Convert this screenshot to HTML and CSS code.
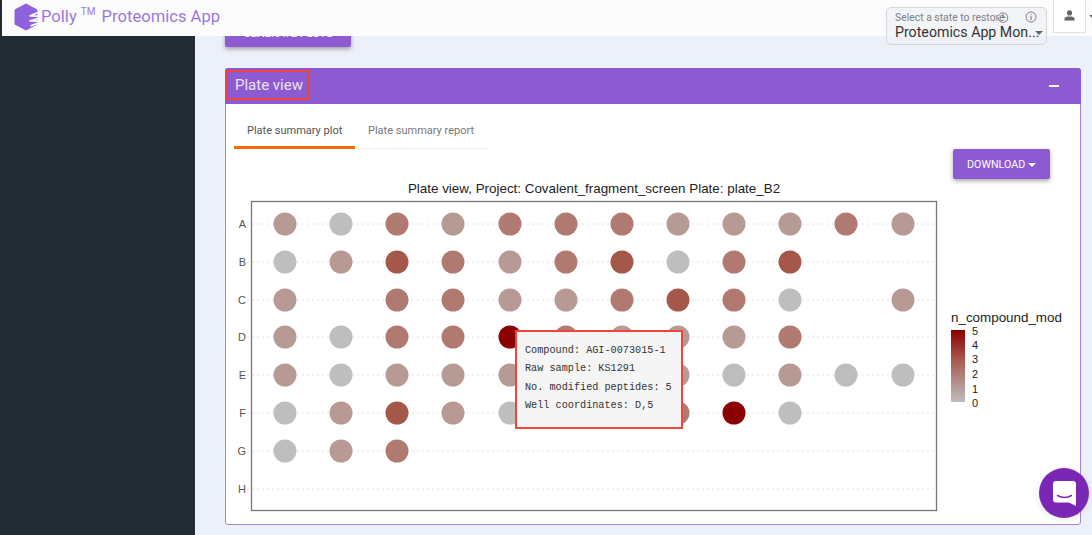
FILE: index.html
```html
<!DOCTYPE html>
<html lang="en">
<head>
  <meta charset="UTF-8">
  <title>Polly Proteomics App</title>
  <link rel="stylesheet" href="styles.css">
</head>
<body>
  <header class="topbar">
    <svg class="logo" viewBox="0 0 24 28" width="24" height="28">
      <path d="M12 0.5 L22.5 6 Q23.5 6.6 23.5 7.6 V20.4 Q23.5 21.4 22.5 22 L12 27.5 L1.5 22 Q0.5 21.4 0.5 20.4 V7.6 Q0.5 6.6 1.5 6 Z" fill="#8e62dc"/>
      <path d="M24 9.5 L15.5 13 L24 13.2 M24 15.6 L15.5 18 L24 18.2 M24 20 L16.5 23" fill="none" stroke="#fcfcfc" stroke-width="1.7"/>
    </svg>
    <span class="brand">Polly<sup>TM</sup> Proteomics App</span>

    <div class="state-select">
      <div class="state-label">Select a state to restore</div>
      <div class="state-value">Proteomics App Mon...</div>
      <span class="caret state-caret"></span>
      <svg class="state-icon history" viewBox="0 0 12 12" width="12" height="12">
        <path d="M2 4 A4.8 4.8 0 1 1 1.2 6.5 M6 3.2 V6.4 H8.6" fill="none" stroke="#666" stroke-width="0.8"/>
      </svg>
      <svg class="state-icon info" viewBox="0 0 12 12" width="12" height="12">
        <circle cx="6" cy="6" r="5" fill="none" stroke="#666" stroke-width="0.8"/>
        <path d="M6 5.2 V9 M6 3.2 V4.2" stroke="#666" stroke-width="1"/>
      </svg>
    </div>

    <button class="user-btn">
      <svg viewBox="0 0 12 12" width="11" height="11">
        <circle cx="6" cy="3.2" r="2.8" fill="#666"/>
        <path d="M0.5 11.5 V9.6 C0.5 7.6 3.5 7 6 7 C8.5 7 11.5 7.6 11.5 9.6 V11.5 Z" fill="#666"/>
      </svg>
    </button>
    <span class="caret user-caret"></span>
  </header>

  <div class="layout">
    <aside class="sidebar"></aside>

    <main class="content">
      <button class="btn generate">GENERATE PLOTS</button>

      <section class="panel">
        <div class="panel-head">
          <h2 class="panel-title">Plate view</h2>
          <span class="collapse"></span>
        </div>

        <div class="panel-body">
          <ul class="tabs">
            <li class="tab active">Plate summary plot</li>
            <li class="tab">Plate summary report</li>
          </ul>

          <div class="actions">
            <button class="btn download">DOWNLOAD <span class="caret"></span></button>
          </div>

          <svg class="plot" viewBox="226 180 854 344" width="854" height="344">
            <defs>
              <linearGradient id="legendFill" x1="0" y1="0" x2="0" y2="1">
                <stop offset="0" stop-color="#8b0000"/>
                <stop offset="0.45" stop-color="#ab5f55"/>
                <stop offset="1" stop-color="#bebebe"/>
              </linearGradient>
            </defs>

            <text class="plot-title" x="594" y="193" text-anchor="middle">Plate view, Project: Covalent_fragment_screen Plate: plate_B2</text>

            <g class="grid">
              <line x1="247" x2="936" y1="224" y2="224"/>
              <line x1="247" x2="936" y1="262" y2="262"/>
              <line x1="247" x2="936" y1="300" y2="300"/>
              <line x1="247" x2="936" y1="337" y2="337"/>
              <line x1="247" x2="936" y1="375" y2="375"/>
              <line x1="247" x2="936" y1="413" y2="413"/>
              <line x1="247" x2="936" y1="451" y2="451"/>
              <line x1="247" x2="936" y1="489" y2="489"/>
            </g>

            <g class="axis" text-anchor="end">
              <text x="246" y="228">A</text>
              <text x="246" y="266">B</text>
              <text x="246" y="304">C</text>
              <text x="246" y="341">D</text>
              <text x="246" y="379">E</text>
              <text x="246" y="417">F</text>
              <text x="246" y="455">G</text>
              <text x="246" y="493">H</text>
            </g>

            <!-- A -->
            <circle class="l1" cx="285" cy="224" r="11.5"/>
            <circle class="l0" cx="341" cy="224" r="11.5"/>
            <circle class="l2" cx="397" cy="224" r="11.5"/>
            <circle class="l1" cx="453" cy="224" r="11.5"/>
            <circle class="l2" cx="510" cy="224" r="11.5"/>
            <circle class="l2" cx="566" cy="224" r="11.5"/>
            <circle class="l2" cx="622" cy="224" r="11.5"/>
            <circle class="l1" cx="678" cy="224" r="11.5"/>
            <circle class="l1" cx="734" cy="224" r="11.5"/>
            <circle class="l1" cx="790" cy="224" r="11.5"/>
            <circle class="l2" cx="846" cy="224" r="11.5"/>
            <circle class="l1" cx="903" cy="224" r="11.5"/>
            <!-- B -->
            <circle class="l0" cx="285" cy="262" r="11.5"/>
            <circle class="l1" cx="341" cy="262" r="11.5"/>
            <circle class="l3" cx="397" cy="262" r="11.5"/>
            <circle class="l2" cx="453" cy="262" r="11.5"/>
            <circle class="l1" cx="510" cy="262" r="11.5"/>
            <circle class="l2" cx="566" cy="262" r="11.5"/>
            <circle class="l3" cx="622" cy="262" r="11.5"/>
            <circle class="l0" cx="678" cy="262" r="11.5"/>
            <circle class="l2" cx="734" cy="262" r="11.5"/>
            <circle class="l3" cx="790" cy="262" r="11.5"/>
            <!-- C -->
            <circle class="l1" cx="285" cy="300" r="11.5"/>
            <circle class="l2" cx="397" cy="300" r="11.5"/>
            <circle class="l2" cx="453" cy="300" r="11.5"/>
            <circle class="l1" cx="510" cy="300" r="11.5"/>
            <circle class="l1" cx="566" cy="300" r="11.5"/>
            <circle class="l2" cx="622" cy="300" r="11.5"/>
            <circle class="l3" cx="678" cy="300" r="11.5"/>
            <circle class="l2" cx="734" cy="300" r="11.5"/>
            <circle class="l0" cx="790" cy="300" r="11.5"/>
            <circle class="l1" cx="903" cy="300" r="11.5"/>
            <!-- D -->
            <circle class="l1" cx="285" cy="337" r="11.5"/>
            <circle class="l0" cx="341" cy="337" r="11.5"/>
            <circle class="l2" cx="397" cy="337" r="11.5"/>
            <circle class="l2" cx="453" cy="337" r="11.5"/>
            <circle class="l5" cx="510" cy="337" r="11.5"/>
            <circle class="l2" cx="566" cy="337" r="11.5"/>
            <circle class="l1" cx="622" cy="337" r="11.5"/>
            <circle class="l1" cx="678" cy="337" r="11.5"/>
            <circle class="l1" cx="734" cy="337" r="11.5"/>
            <circle class="l2" cx="790" cy="337" r="11.5"/>
            <!-- E -->
            <circle class="l1" cx="285" cy="375" r="11.5"/>
            <circle class="l0" cx="341" cy="375" r="11.5"/>
            <circle class="l1" cx="397" cy="375" r="11.5"/>
            <circle class="l1" cx="453" cy="375" r="11.5"/>
            <circle class="l1" cx="510" cy="375" r="11.5"/>
            <circle class="l1" cx="678" cy="375" r="11.5"/>
            <circle class="l0" cx="734" cy="375" r="11.5"/>
            <circle class="l1" cx="790" cy="375" r="11.5"/>
            <circle class="l0" cx="846" cy="375" r="11.5"/>
            <circle class="l0" cx="903" cy="375" r="11.5"/>
            <!-- F -->
            <circle class="l0" cx="285" cy="413" r="11.5"/>
            <circle class="l1" cx="341" cy="413" r="11.5"/>
            <circle class="l3" cx="397" cy="413" r="11.5"/>
            <circle class="l1" cx="453" cy="413" r="11.5"/>
            <circle class="l0" cx="510" cy="413" r="11.5"/>
            <circle class="l2" cx="678" cy="413" r="11.5"/>
            <circle class="l5" cx="734" cy="413" r="11.5"/>
            <circle class="l0" cx="790" cy="413" r="11.5"/>
            <!-- G -->
            <circle class="l0" cx="285" cy="451" r="11.5"/>
            <circle class="l1" cx="341" cy="451" r="11.5"/>
            <circle class="l2" cx="397" cy="451" r="11.5"/>

            <rect class="frame" x="251.5" y="201.5" width="685" height="309"/>

            <text class="legend-title" x="951" y="322">n_compound_mod</text>
            <rect x="951" y="330" width="14" height="72" fill="url(#legendFill)"/>
            <g class="legend-ticks">
              <text x="972" y="335">5</text>
              <text x="972" y="349">4</text>
              <text x="972" y="363">3</text>
              <text x="972" y="378">2</text>
              <text x="972" y="393">1</text>
              <text x="972" y="407">0</text>
            </g>
          </svg>

          <div class="tooltip">
            <div>Compound: AGI-0073015-1</div>
            <div>Raw sample: KS1291</div>
            <div>No. modified peptides: 5</div>
            <div>Well coordinates: D,5</div>
          </div>
        </div>
      </section>
    </main>
  </div>

  <button class="chat">
    <svg viewBox="0 0 23 25" width="23" height="25">
      <path d="M3 0 H20 A3 3 0 0 1 23 3 V25 L16 21.5 H3 A3 3 0 0 1 0 18.5 V3 A3 3 0 0 1 3 0 Z" fill="#fff"/>
      <path d="M4.5 14.5 Q11.5 18.5 18.5 14.5" fill="none" stroke="#7b27b5" stroke-width="1.5" stroke-linecap="round"/>
    </svg>
  </button>
</body>
</html>
```

FILE: styles.css
```css
* {
  box-sizing: border-box;
}
html, body {
  height: 100%;
}
body {
  margin: 0;
  font-family: Roboto, Arial, sans-serif;
  background: #ecf0f9;
  overflow: hidden;
}

/* top bar */
.topbar {
  position: absolute;
  top: 0;
  left: 2px;
  right: 0;
  height: 36px;
  background: #fcfcfc;
  z-index: 5;
  display: flex;
  align-items: center;
  padding-left: 12px;
}
.logo {
  flex: none;
  margin-top: -2px;
}
.brand {
  margin-left: 3px;
  margin-top: -3px;
  font-size: 16.6px;
  color: #9d78dc;
  white-space: nowrap;
}
.brand sup {
  font-size: 10px;
  margin-left: 4px;
  margin-right: 2px;
  line-height: 0;
}
.state-select {
  position: absolute;
  top: 7px;
  left: 884px;
  width: 161px;
  height: 38px;
  padding: 5px 8px;
  border: 1px solid #d4d6da;
  border-radius: 5px;
  background: rgba(240, 241, 245, 0.75);
}
.state-label {
  font-size: 10.4px;
  line-height: 10px;
  color: #808080;
  white-space: nowrap;
}
.state-value {
  font-size: 14.2px;
  line-height: 18px;
  color: #333;
  white-space: nowrap;
}
.state-caret {
  position: absolute;
  top: 23px;
  right: 3px;
  color: #666;
}
.state-icon {
  position: absolute;
  top: 3px;
}
.history {
  left: 110px;
}
.info {
  left: 138px;
}
.user-btn {
  position: absolute;
  top: 0;
  left: 1051px;
  width: 33px;
  height: 33px;
  padding: 0;
  background: #fff;
  border: 1px solid #e2e2e2;
  border-top: none;
}
.user-caret {
  position: absolute;
  top: 15px;
  left: 1087px;
  color: #666;
}
.caret {
  display: inline-block;
  width: 0;
  height: 0;
  border-left: 4px solid transparent;
  border-right: 4px solid transparent;
  border-top: 4px solid currentColor;
  vertical-align: middle;
}

/* page */
.layout {
  display: flex;
  height: 100%;
}
.sidebar {
  flex: none;
  width: 195px;
  background: #212d33;
}
.content {
  flex: 1;
  padding: 13px 11px 0 30px;
}
.btn {
  border: none;
  border-radius: 2px;
  background: #8e5ad1;
  color: #fff;
  font-family: Roboto, Arial, sans-serif;
  box-shadow: 0 2px 4px rgba(0, 0, 0, 0.35);
}
.generate {
  display: block;
  width: 126px;
  height: 34px;
  padding-top: 8px;
  font-size: 11px;
}

/* panel */
.panel {
  margin-top: 21px;
  width: 856px;
  height: 457px;
  border: 1px solid #a883e0;
  border-radius: 3px;
  background: #fff;
}
.panel-head {
  height: 36px;
  margin: -1px -1px 0;
  padding: 0 22px 0 1px;
  background: #8e5ad1;
  border-radius: 3px 3px 0 0;
  display: flex;
  align-items: center;
  justify-content: space-between;
}
.panel-title {
  margin: -3px 0 0;
  padding: 0 4px 0 7px;
  height: 30px;
  line-height: 26px;
  font-size: 15px;
  font-weight: 400;
  color: #ece3f8;
  border: 2px solid #f0423c;
}
.collapse {
  width: 10px;
  height: 2px;
  background: #fff;
}
.panel-body {
  position: relative;
}
.tabs {
  list-style: none;
  margin: 0 0 0 8px;
  padding: 0;
  width: 254px;
  height: 45px;
  display: flex;
  border-bottom: 1px solid #eee;
}
.tab {
  height: 45px;
  padding: 20px 13px 0;
  font-size: 11px;
  color: #777;
  white-space: nowrap;
}
.tab.active {
  width: 121px;
  color: #555;
  border-bottom: 3px solid #f76b00;
}
.actions {
  display: flex;
  justify-content: flex-end;
  padding-right: 30px;
}
.download {
  width: 97px;
  height: 30px;
  font-size: 10.7px;
}
.plot {
  display: block;
  margin-top: 1px;
  margin-left: 0;
}

/* plot */
.plot-title {
  font-family: "Liberation Sans", Arial, sans-serif;
  font-size: 13.4px;
  fill: #222;
}
.grid line {
  stroke: #e2e2e2;
  stroke-width: 1;
  stroke-dasharray: 2 3;
}
.axis text {
  font-family: "Liberation Sans", Arial, sans-serif;
  font-size: 11px;
  fill: #555;
}
.frame {
  fill: none;
  stroke: #777;
  stroke-width: 1.3;
}
.l0 { fill: #bebebe; }
.l1 { fill: #b89a95; }
.l2 { fill: #b07a70; }
.l3 { fill: #a3584a; }
.l5 { fill: #8b0000; }
.legend-title {
  font-family: "Liberation Sans", Arial, sans-serif;
  font-size: 13.4px;
  fill: #222;
}
.legend-ticks text {
  font-family: "Liberation Sans", Arial, sans-serif;
  font-size: 11px;
  fill: #222;
}

/* hover box over the plot */
.tooltip {
  position: absolute;
  top: 226px;
  left: 289px;
  width: 168px;
  height: 99px;
  padding: 10px 8px;
  background: #f5f5f5;
  border: 2px solid #f0443c;
  font-family: "Liberation Mono", "Courier New", monospace;
  font-size: 10.2px;
  line-height: 18.4px;
  color: #333;
  white-space: nowrap;
}

/* chat launcher */
.chat {
  position: absolute;
  left: 1039px;
  top: 468px;
  width: 50px;
  height: 50px;
  padding: 0;
  border: none;
  border-radius: 50%;
  background: #7b27b5;
  display: flex;
  align-items: center;
  justify-content: center;
  box-shadow: 0 1px 6px rgba(0, 0, 0, 0.12);
  z-index: 6;
}
```
